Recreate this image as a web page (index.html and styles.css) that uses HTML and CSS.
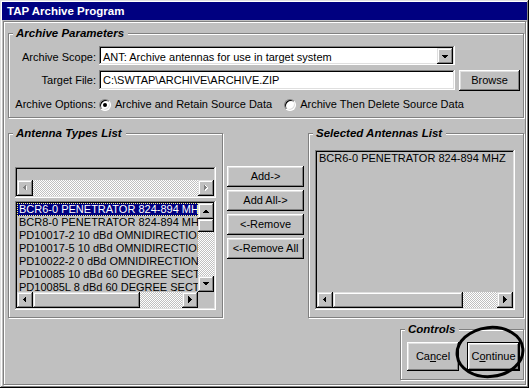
FILE: index.html
```html
<!DOCTYPE html>
<html>
<head>
<meta charset="utf-8">
<title>TAP Archive Program</title>
<link rel="stylesheet" href="styles.css">
</head>
<body>
<div class="window">
  <div class="titlebar">TAP Archive Program</div>
  <div class="panel">
    <fieldset class="group params">
      <legend>Archive Parameters</legend>
      <div class="row row-scope">
        <span class="lbl">Archive Scope:</span>
        <div class="combo sunken">
          <span class="combo-text">ANT: Archive antennas for use in target system</span>
          <span class="sbtn combo-btn"><svg width="16" height="15" viewBox="0 0 16 15" shape-rendering="crispEdges"><polygon points="4,6 11,6 7.5,9.5" fill="#000"/></svg></span>
        </div>
      </div>
      <div class="row row-target">
        <span class="lbl">Target File:</span>
        <div class="field sunken">C:\SWTAP\ARCHIVE\ARCHIVE.ZIP</div>
        <button class="btn browse">Browse</button>
      </div>
      <div class="row row-options">
        <span class="lbl">Archive Options:</span>
        <div class="radios">
          <span class="opt opt-first"><span class="radio on"></span><span>Archive and Retain Source Data</span></span>
          <span class="opt"><span class="radio"></span><span>Archive Then Delete Source Data</span></span>
        </div>
      </div>
    </fieldset>

    <div class="mid">
      <fieldset class="group types">
        <legend>Antenna Types List</legend>
        <div class="topbox sunken">
          <div class="hscroll">
            <span class="sbtn"><svg width="16" height="16" viewBox="0 0 16 16" shape-rendering="crispEdges"><polygon points="10,5 7,8 10,11" fill="#fff"/><polygon points="9,4 6,7.5 9,11" fill="#808080"/></svg></span>
            <span class="track"></span>
            <span class="sbtn"><svg width="16" height="16" viewBox="0 0 16 16" shape-rendering="crispEdges"><polygon points="7,5 10,8 7,11" fill="#fff"/><polygon points="6,4 9,7.5 6,11" fill="#808080"/></svg></span>
          </div>
        </div>
        <div class="list sunken">
          <div class="items">
            <div class="item sel">BCR6-0 PENETRATOR 824-894 MHZ</div>
            <div class="item">BCR8-0 PENETRATOR 824-894 MHZ</div>
            <div class="item">PD10017-2 10 dBd OMNIDIRECTIONAL</div>
            <div class="item">PD10017-5 10 dBd OMNIDIRECTIONAL</div>
            <div class="item">PD10022-2 0 dBd OMNIDIRECTIONAL</div>
            <div class="item">PD10085 10 dBd 60 DEGREE SECTOR</div>
            <div class="item">PD10085L 8 dBd 60 DEGREE SECTOR</div>
          </div>
          <div class="vscroll">
            <span class="sbtn"><svg width="16" height="16" viewBox="0 0 16 16" shape-rendering="crispEdges"><polygon points="4,10 11,10 7.5,6.5" fill="#000"/></svg></span>
            <span class="thumb vthumb"></span>
            <span class="track"></span>
            <span class="sbtn"><svg width="16" height="16" viewBox="0 0 16 16" shape-rendering="crispEdges"><polygon points="4,6 11,6 7.5,9.5" fill="#000"/></svg></span>
          </div>
          <div class="hscroll">
            <span class="sbtn"><svg width="16" height="16" viewBox="0 0 16 16" shape-rendering="crispEdges"><polygon points="9,4 5.5,7.5 9,11" fill="#000"/></svg></span>
            <span class="thumb hthumb-a"></span>
            <span class="track"></span>
            <span class="sbtn"><svg width="16" height="16" viewBox="0 0 16 16" shape-rendering="crispEdges"><polygon points="6,4 9.5,7.5 6,11" fill="#000"/></svg></span>
          </div>
          <div class="corner"></div>
        </div>
      </fieldset>

      <div class="btn-col">
        <button class="btn">Add-&gt;</button>
        <button class="btn">Add All-&gt;</button>
        <button class="btn">&lt;-Remove</button>
        <button class="btn">&lt;-Remove All</button>
      </div>

      <fieldset class="group selected">
        <legend>Selected Antennas List</legend>
        <div class="list list-sel sunken">
          <div class="items">
            <div class="item">BCR6-0 PENETRATOR 824-894 MHZ</div>
          </div>
          <div class="hscroll">
            <span class="sbtn"><svg width="16" height="16" viewBox="0 0 16 16" shape-rendering="crispEdges"><polygon points="9,4 5.5,7.5 9,11" fill="#000"/></svg></span>
            <span class="thumb hthumb-b"></span>
            <span class="track"></span>
            <span class="sbtn"><svg width="16" height="16" viewBox="0 0 16 16" shape-rendering="crispEdges"><polygon points="6,4 9.5,7.5 6,11" fill="#000"/></svg></span>
          </div>
        </div>
      </fieldset>
    </div>

    <fieldset class="group controls">
      <legend>Controls</legend>
      <div class="ctl-row">
        <button class="btn cancel">Ca<u>n</u>cel</button>
        <button class="btn continue">C<u>o</u>ntinue</button>
      </div>
    </fieldset>
  </div>

  <svg class="annot" width="74" height="58" viewBox="0 0 74 58"><ellipse cx="37" cy="29" rx="33" ry="24.5" fill="none" stroke="#000" stroke-width="3" transform="rotate(-6 37 29)"/></svg>
</div>
</body>
</html>
```

FILE: styles.css
```css
* { box-sizing: border-box; }
html, body { margin: 0; padding: 0; }
body {
  width: 529px;
  height: 388px;
  overflow: hidden;
  background: #c0c0c0;
  font-family: "Liberation Sans", Arial, sans-serif;
  font-size: 11px;
  color: #000;
}

.window {
  position: relative;
  width: 529px;
  height: 388px;
  padding: 2px;
  background: #c0c0c0;
  box-shadow: inset -1px -1px #000, inset 1px 1px #dfdfdf, inset -2px -2px #808080, inset 2px 2px #fff;
}

.titlebar {
  height: 18px;
  background: #000080;
  color: #fff;
  font-weight: bold;
  font-size: 11.5px;
  line-height: 17px;
  padding: 1px 0 0 5px;
  white-space: nowrap;
}

.panel {
  margin: 1px 1px 0 1px;
  height: 364px;
  border: 1px solid #808080;
  box-shadow: inset 1px 1px #fff, 1px 1px #fff;
  padding: 5px 0 0 4px;
}

/* group boxes */
.group {
  margin: 0;
  min-width: 0;
  border: 1px solid #808080;
  box-shadow: inset 1px 1px #fff, 1px 1px #fff;
  padding: 6px;
}
.group legend {
  font-weight: bold;
  font-style: italic;
  font-size: 11.5px;
  line-height: 13px;
  padding: 0 4px 0 3px;
  margin-left: -2px;
  background: #c0c0c0;
  white-space: nowrap;
}

.params {
  width: 516px;
  padding: 6px 3px 6px 6px;
}

.row { display: flex; align-items: flex-start; gap: 3px; }
.row-scope { height: 19px; margin-bottom: 5px; }
.row-target { height: 21px; margin-bottom: 7px; }
.row-options { height: 13px; }
.lbl {
  width: 81px;
  flex: none;
  text-align: right;
  line-height: 13px;
  white-space: nowrap;
}
.row-scope .lbl { padding-top: 5px; }
.row-target .lbl { padding-top: 4px; }

.sunken {
  box-shadow: inset -1px -1px #fff, inset 1px 1px #808080, inset -2px -2px #dfdfdf, inset 2px 2px #000;
  padding: 2px;
}

.combo {
  width: 356px;
  height: 19px;
  background: #fff;
  display: flex;
}
.combo-text {
  flex: 1;
  min-width: 0;
  padding: 3px 0 0 2px;
  line-height: 13px;
  white-space: nowrap;
  overflow: hidden;
}
.combo-btn { height: 15px; }

.field {
  width: 356px;
  height: 20px;
  background: #fff;
  padding: 4px 2px 0 4px;
  line-height: 13px;
  white-space: nowrap;
  overflow: hidden;
}

.btn {
  font-family: inherit;
  font-size: 11px;
  color: #000;
  background: #c0c0c0;
  border: 0;
  margin: 0;
  padding: 0;
  height: 21px;
  line-height: 13px;
  box-shadow: inset -1px -1px #000, inset 1px 1px #fff, inset -2px -2px #808080, inset 2px 2px #dfdfdf;
}
.browse { width: 61px; margin-left: 1px; }

.radios { display: flex; align-items: center; height: 13px; }
.opt { display: flex; align-items: center; gap: 4px; line-height: 13px; white-space: nowrap; }
.opt-first { margin-right: 12px; }
.radio {
  width: 12px;
  height: 12px;
  flex: none;
  border-radius: 50%;
  background: #fff;
  border: 1px solid;
  border-color: #808080 #fff #fff #808080;
  box-shadow: inset 1px 1px #000, inset -1px -1px #dfdfdf;
  display: flex;
  align-items: center;
  justify-content: center;
}
.radio.on::after {
  content: "";
  width: 4px;
  height: 4px;
  border-radius: 50%;
  background: #000;
}

/* middle */
.mid {
  display: flex;
  gap: 4px;
  margin-top: 9px;
  align-items: stretch;
}
.types { width: 215px; padding: 27px 6px 7px 6px; }
.selected { width: 216px; padding: 10px 7px 7px 6px; }

.btn-col {
  width: 77px;
  display: flex;
  flex-direction: column;
  gap: 3px;
  margin-top: 39px;
  align-self: flex-start;
}
.btn-col .btn { width: 77px; }

.topbox {
  width: 201px;
  height: 31px;
  display: flex;
  flex-direction: column;
  justify-content: flex-end;
}

.hscroll { display: flex; height: 16px; }
.vscroll { display: flex; flex-direction: column; width: 16px; }
.track {
  flex: 1;
  background: repeating-conic-gradient(#c0c0c0 0 25%, #fff 0 50%) 0 0 / 2px 2px;
}
.sbtn, .thumb {
  flex: none;
  width: 16px;
  height: 16px;
  background: #c0c0c0;
  box-shadow: inset -1px -1px #000, inset 1px 1px #dfdfdf, inset -2px -2px #808080, inset 2px 2px #fff;
  display: flex;
  align-items: center;
  justify-content: center;
}
.sbtn svg { display: block; }
.vthumb { height: 13px; }
.hthumb-a { width: 107px; }
.hthumb-b { width: 130px; }

.list {
  width: 201px;
  height: 109px;
  margin-top: 3px;
  display: grid;
  grid-template-columns: 1fr 16px;
  grid-template-rows: 1fr 16px;
}
.items { overflow: hidden; min-width: 0; }
.item {
  height: 13px;
  line-height: 13px;
  padding-left: 2px;
  white-space: nowrap;
}
.item.sel {
  background: #000080;
  color: #fff;
  outline: 1px dotted #ffff80;
  outline-offset: -1px;
}
.corner { background: #c0c0c0; }

.list-sel {
  width: 200px;
  height: 160px;
  margin-top: 0;
  grid-template-columns: 1fr;
}

/* controls */
.controls {
  width: 124px;
  margin: 5px 0 0 392px;
  padding: 6px 2px 8px 6px;
}
.ctl-row { display: flex; gap: 8px; }
.cancel { width: 52px; height: 29px; }
.continue {
  width: 53px;
  height: 29px;
  box-shadow: inset 0 0 0 1px #000, inset -2px -2px #000, inset 2px 2px #fff, inset -3px -3px #808080, inset 3px 3px #dfdfdf;
}

.annot {
  position: absolute;
  left: 453px;
  top: 323px;
  overflow: visible;
}
```
